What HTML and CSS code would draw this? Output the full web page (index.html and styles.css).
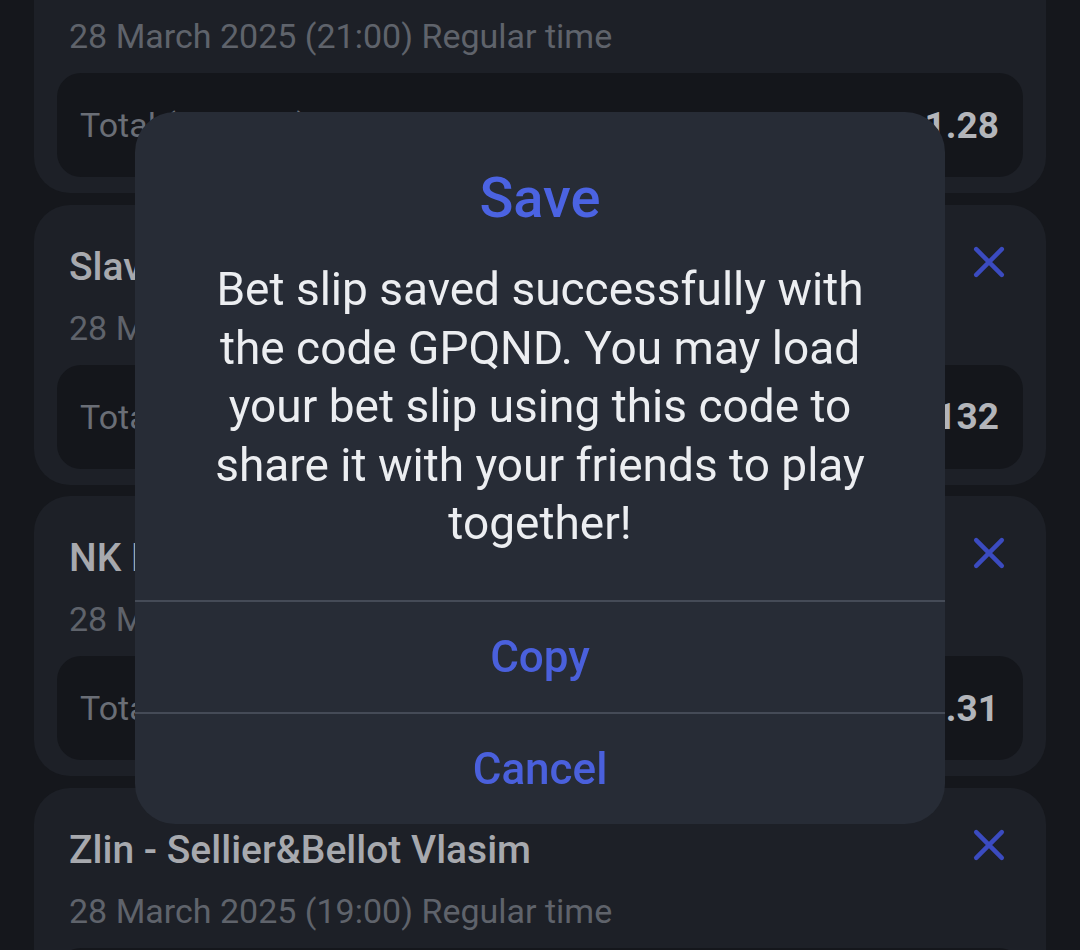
FILE: index.html
```html
<!DOCTYPE html>
<html lang="en">
<head>
<meta charset="utf-8">
<title>Bet slip</title>
<link rel="stylesheet" href="styles.css">
</head>
<body>
<div class="list">
  <div class="card">
    <div class="head">
      <div class="title">Rijeka - Osijek</div>
      <svg class="close" viewBox="0 0 30 30"><path d="M3 3 L27 27 M27 3 L3 27"/></svg>
    </div>
    <div class="date">28 March 2025 (21:00) Regular time</div>
    <div class="odds"><span class="label">Total (over 1.5)</span><span class="value">1.28</span></div>
  </div>
  <div class="card">
    <div class="head">
      <div class="title">Slavia Prague - Teplice</div>
      <svg class="close" viewBox="0 0 30 30"><path d="M3 3 L27 27 M27 3 L3 27"/></svg>
    </div>
    <div class="date">28 March 2025 (20:00) Regular time</div>
    <div class="odds"><span class="label">Total goals (over 2.5)</span><span class="value">1.132</span></div>
  </div>
  <div class="card">
    <div class="head">
      <div class="title">NK Bravo - NK Radomlje</div>
      <svg class="close" viewBox="0 0 30 30"><path d="M3 3 L27 27 M27 3 L3 27"/></svg>
    </div>
    <div class="date">28 March 2025 (20:15) Regular time</div>
    <div class="odds"><span class="label">Total goals (over 1.5)</span><span class="value">1.31</span></div>
  </div>
  <div class="card">
    <div class="head">
      <div class="title">Zlin - Sellier&amp;Bellot Vlasim</div>
      <svg class="close" viewBox="0 0 30 30"><path d="M3 3 L27 27 M27 3 L3 27"/></svg>
    </div>
    <div class="date">28 March 2025 (19:00) Regular time</div>
    <div class="odds"><span class="label">Total goals (over 1.5)</span><span class="value">1.25</span></div>
  </div>
</div>

<div class="overlay">
  <div class="dialog">
    <div class="d-title">Save</div>
    <div class="d-body">Bet slip saved successfully with<br>the code GPQND. You may load<br>your bet slip using this code to<br>share it with your friends to play<br>together!</div>
    <div class="d-btn">Copy</div>
    <div class="d-btn">Cancel</div>
  </div>
</div>
</body>
</html>
```

FILE: styles.css
```css
html, body {
  margin: 0;
  padding: 0;
  background: #15171c;
  height: 950px;
  overflow: hidden;
  font-family: Roboto, "Noto Sans", "Liberation Sans", sans-serif;
}

.list {
  margin-top: -87px;
  padding: 0 34px;
  display: flex;
  flex-direction: column;
  gap: 11.5px;
}

.card {
  background: #1d2027;
  border-radius: 36px;
  height: 280px;
  box-sizing: border-box;
  padding: 40px 23px 16px;
  display: flex;
  flex-direction: column;
}

.head {
  display: flex;
  justify-content: space-between;
  align-items: flex-start;
  height: 44px;
}

.title {
  margin-left: 12px;
  font-size: 39px;
  font-weight: 500;
  line-height: 44px;
  color: #a7a9ae;
  white-space: nowrap;
}

.close {
  width: 32px;
  height: 32px;
  margin-top: 1px;
  margin-right: 18px;
  fill: none;
  stroke: #3b4bc0;
  stroke-width: 4.2;
  stroke-linecap: round;
}

.date {
  margin: 19px 0 0 12px;
  font-size: 34px;
  line-height: 40px;
  color: #5f636b;
  white-space: nowrap;
}

.odds {
  margin-top: 17px;
  height: 104px;
  background: #14161b;
  border-radius: 24px;
  display: flex;
  align-items: center;
  justify-content: space-between;
  padding: 0 24px 0 23px;
}

.label {
  font-size: 34px;
  color: #6a6e76;
  white-space: nowrap;
}

.value {
  font-size: 37px;
  font-weight: 700;
  color: #b3b5ba;
}

.overlay {
  position: fixed;
  inset: 0;
}

.dialog {
  position: absolute;
  left: 135px;
  top: 112px;
  width: 810px;
  height: 712px;
  box-sizing: border-box;
  background: #272c36;
  border-radius: 40px;
  padding-top: 58px;
  display: flex;
  flex-direction: column;
  text-align: center;
  overflow: hidden;
}

.d-title {
  font-size: 56px;
  font-weight: 500;
  line-height: 56px;
  color: #4b63e2;
}

.d-body {
  margin: 34px 0 47px;
  font-size: 46px;
  line-height: 58.5px;
  color: #eceef1;
}

.d-btn {
  border-top: 2px solid #454b57;
  height: 111px;
  display: flex;
  align-items: center;
  justify-content: center;
  font-size: 44px;
  font-weight: 500;
  color: #4a60dc;
}
```
